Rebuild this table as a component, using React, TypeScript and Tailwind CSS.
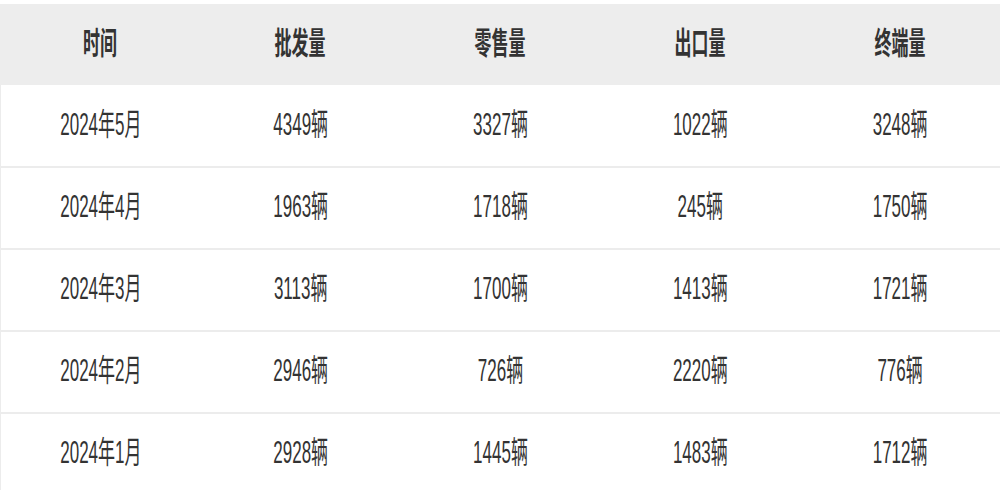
import React from "react";

const headers = ["时间", "批发量", "零售量", "出口量", "终端量"];
const rows = [
  ["2024年5月", "4349辆", "3327辆", "1022辆", "3248辆"],
  ["2024年4月", "1963辆", "1718辆", "245辆", "1750辆"],
  ["2024年3月", "3113辆", "1700辆", "1413辆", "1721辆"],
  ["2024年2月", "2946辆", "726辆", "2220辆", "776辆"],
  ["2024年1月", "2928辆", "1445辆", "1483辆", "1712辆"],
];

const font = { fontFamily: '"Liberation Sans", "Noto Sans CJK SC", sans-serif' };

export default function App() {
  return (
    <div className="w-[1000px] h-[490px] overflow-hidden bg-white pt-1" style={font}>
      <div className="grid grid-cols-5 h-[81px] bg-[#ededed] items-center">
        {headers.map((h) => (
          <div key={h} className="flex justify-center">
            <span className="inline-block scale-y-[1.8] text-[17px] font-bold text-[#333]">{h}</span>
          </div>
        ))}
      </div>
      {rows.map((r, i) => (
        <div
          key={i}
          className={`grid grid-cols-5 items-center border-b-2 border-l border-[#ececec] ${i === 0 ? "h-[83px]" : "h-[82px]"}`}
        >
          {r.map((c, j) => (
            <div key={j} className="flex justify-center">
              <span className="inline-block scale-y-[1.8] text-[17px] text-[#333]">{c}</span>
            </div>
          ))}
        </div>
      ))}
    </div>
  );
}
